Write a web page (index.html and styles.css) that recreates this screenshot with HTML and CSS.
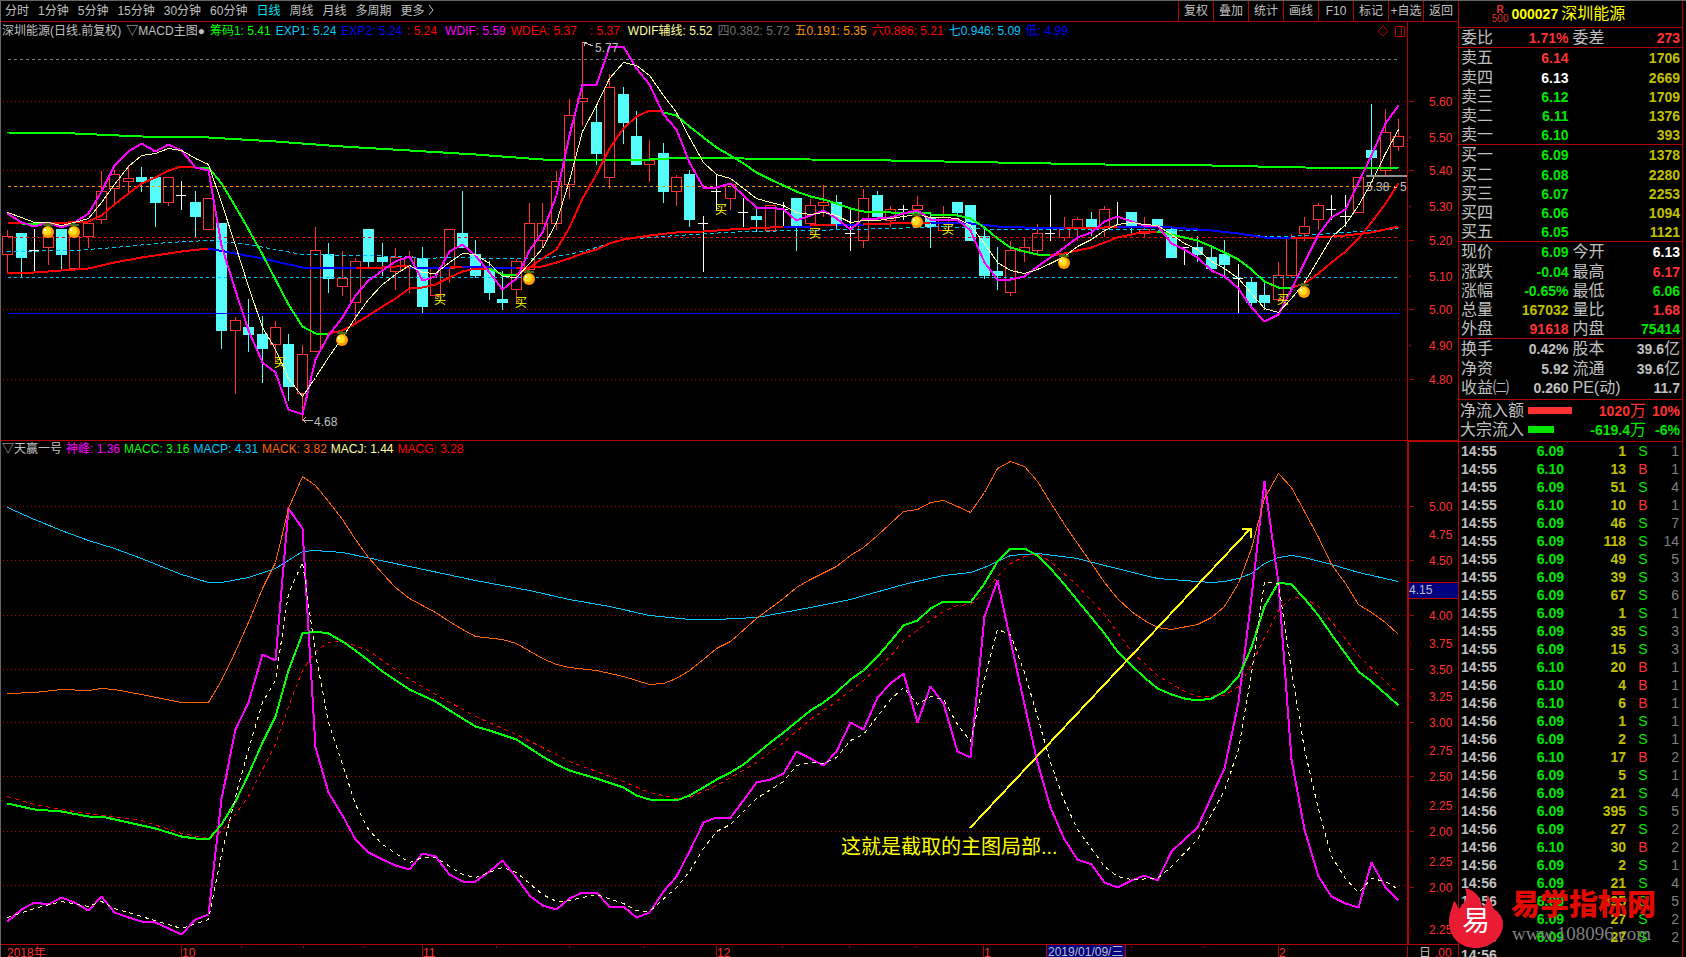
FILE: index.html
```
<!DOCTYPE html>
<html lang="zh-CN">
<head>
  <meta charset="UTF-8">
  <title>000027 深圳能源</title>
  <link rel="stylesheet" href="styles.css">
</head>
<body>
  <div class="left">
    <div class="toolbar">
      <nav class="periods">
        <a href="#">分时</a>
        <a href="#">1分钟</a>
        <a href="#">5分钟</a>
        <a href="#">15分钟</a>
        <a href="#">30分钟</a>
        <a href="#">60分钟</a>
        <a href="#" class="active">日线</a>
        <a href="#">周线</a>
        <a href="#">月线</a>
        <a href="#">多周期</a>
        <a href="#">更多 <svg width="6" height="10" viewBox="0 0 6 10"><path d="M1 0l4 5l-4 5" fill="none" stroke="#c0c0c0"/></svg></a>
      </nav>
      <div class="tools">
        <button>复权</button>
        <button>叠加</button>
        <button>统计</button>
        <button>画线</button>
        <button>F10</button>
        <button>标记</button>
        <button>+自选</button>
        <button>返回</button>
      </div>
    </div>

    <div class="pane pane-main">
      <div class="plot">
        <div class="legend">
          <span>深圳能源(日线.前复权)</span>
          <span>▽MACD主图●</span>
          <span class="lime">筹码1: 5.41</span>
          <span class="sky">EXP1: 5.24</span>
          <span class="blue">EXP2: 5.24</span>
          <span class="pure">: 5.24</span>
          <span class="pink wide">WDIF: 5.59</span>
          <span class="pure">WDEA: 5.37</span>
          <span class="pure wider">: 5.37</span>
          <span class="cream wide">WDIF辅线: 5.52</span>
          <span class="dim">四0.382: 5.72</span>
          <span class="orange">五0.191: 5.35</span>
          <span class="pure">六0.886: 5.21</span>
          <span class="sky">七0.946: 5.09</span>
          <span class="blue">低: 4.99</span>
          <svg class="marks" width="28" height="12" viewBox="0 0 28 12">
            <path d="M6 1l5 5l-5 5l-5 -5z" fill="none" stroke="#b40000"/>
            <path d="M18.500 1.500h9v10h-9zM24.500 1.500v10" fill="none" stroke="#b40000"/>
          </svg>
        </div>
        <svg id="mainChart" class="chart"></svg>
      </div>
      <svg id="mainAxis" class="axis"></svg>
    </div>

    <div class="pane pane-sub">
      <div class="plot">
        <div class="legend">
          <span>▽天赢一号</span>
          <span class="pink">神峰: 1.36</span>
          <span class="lime">MACC: 3.16</span>
          <span class="sky">MACP: 4.31</span>
          <span class="mack">MACK: 3.82</span>
          <span class="cream">MACJ: 1.44</span>
          <span class="pure">MACG: 3.28</span>
        </div>
        <svg id="subChart" class="chart"></svg>
      </div>
      <svg id="subAxis" class="axis"></svg>
    </div>

    <div class="dates">
      <svg id="dateAxis" class="chart"></svg>
    </div>
  </div>

  <div class="quote">
    <h1 class="title"><span class="badge"><b>R</b><i>500</i></span>000027 <span>深圳能源</span></h1>

    <table class="rows one">
      <tr><th>委比</th><td class="red">1.71%</td><th>委差</th><td class="red">273</td></tr>
    </table>

    <table class="rows">
      <tr><th>卖五</th><td class="red">6.14</td><th></th><td class="vol">1706</td></tr>
      <tr><th>卖四</th><td class="white">6.13</td><th></th><td class="vol">2669</td></tr>
      <tr><th>卖三</th><td class="green">6.12</td><th></th><td class="vol">1709</td></tr>
      <tr><th>卖二</th><td class="green">6.11</td><th></th><td class="vol">1376</td></tr>
      <tr><th>卖一</th><td class="green">6.10</td><th></th><td class="vol">393</td></tr>
    </table>

    <table class="rows">
      <tr><th>买一</th><td class="green">6.09</td><th></th><td class="vol">1378</td></tr>
      <tr><th>买二</th><td class="green">6.08</td><th></th><td class="vol">2280</td></tr>
      <tr><th>买三</th><td class="green">6.07</td><th></th><td class="vol">2253</td></tr>
      <tr><th>买四</th><td class="green">6.06</td><th></th><td class="vol">1094</td></tr>
      <tr><th>买五</th><td class="green">6.05</td><th></th><td class="vol">1121</td></tr>
    </table>

    <table class="rows">
      <tr><th>现价</th><td class="green">6.09</td><th>今开</th><td class="white">6.13</td></tr>
      <tr><th>涨跌</th><td class="green">-0.04</td><th>最高</th><td class="red">6.17</td></tr>
      <tr><th>涨幅</th><td class="green">-0.65%</td><th>最低</th><td class="green">6.06</td></tr>
      <tr><th>总量</th><td class="vol">167032</td><th>量比</th><td class="red">1.68</td></tr>
      <tr><th>外盘</th><td class="red">91618</td><th>内盘</th><td class="green">75414</td></tr>
    </table>

    <table class="rows three">
      <tr><th>换手</th><td>0.42%</td><th>股本</th><td>39.6<span>亿</span></td></tr>
      <tr><th>净资</th><td>5.92</td><th>流通</th><td>39.6<span>亿</span></td></tr>
      <tr><th>收益㈡</th><td>0.260</td><th>PE(动)</th><td>11.7</td></tr>
    </table>

    <div class="flows">
      <div class="flow red"><span class="name">净流入额</span><span class="bar" style="width:44px"></span><span class="sum">1020<span>万</span></span><span class="pct">10%</span></div>
      <div class="flow green"><span class="name">大宗流入</span><span class="bar" style="width:26px"></span><span class="sum">-619.4<span>万</span></span><span class="pct">-6%</span></div>
    </div>

    <div class="ticks">
      <table id="ticks"></table>
    </div>

    <div class="brand">
      <svg width="54" height="60" viewBox="0 0 54 60">
        <path d="M16 0C25 2 32 8 33 19C38 17 38 12 38 7C42 12 43 16 44 20C51 25 54 30 54 36C54 50 41 60 27 60C12 60 0 50 0 34C0 26 3 20 5 13C8 15 8 19 10 21C15 15 20 10 16 0z" fill="#ea1c34"/>
        <text x="27" y="43" text-anchor="middle" class="brand-mark">易</text>
      </svg>
      <div>
        <div class="brand-name">易学指标网</div>
        <div class="brand-url">www.108096.com</div>
      </div>
    </div>
  </div>

  <script src="chart.js"></script>
</body>
</html>
```

FILE: styles.css
```
* {
  box-sizing: border-box;
}
body {
  margin: 0;
  height: 100vh;
  display: grid;
  grid-template-columns: minmax(0, 1fr) 228px;
  overflow: hidden;
  background: #000;
  color: #c0c0c0;
  border-top: 1px solid #666;
  border-left: 1px solid #666;
  font: 12px/16px "Liberation Sans", "Noto Sans CJK SC", sans-serif;
}
a {
  color: inherit;
  text-decoration: none;
}

/* left side */
.left {
  display: grid;
  grid-template-rows: 21px minmax(0, 418fr) minmax(0, 504fr) 13px;
  min-width: 0;
}
.toolbar {
  display: flex;
  justify-content: space-between;
  border-bottom: 1px solid #b40000;
}
.periods {
  display: flex;
  align-items: center;
  gap: 9px;
  padding-left: 4px;
  white-space: nowrap;
}
.periods .active {
  color: #00e0f0;
}
.tools {
  display: flex;
}
.tools button {
  width: 35px;
  padding: 0;
  border: 0;
  border-left: 1px solid #b40000;
  background: none;
  color: inherit;
  font: inherit;
  white-space: nowrap;
}
.pane {
  display: grid;
  grid-template-columns: minmax(0, 1fr) 51px;
  min-height: 0;
}
.pane-sub {
  border-top: 1px solid #b40000;
}
.plot {
  display: flex;
  flex-direction: column;
  min-height: 0;
}
.legend {
  display: flex;
  gap: 5px;
  height: 18px;
  line-height: 18px;
  padding-left: 1px;
  white-space: nowrap;
}
.pane-sub .legend {
  gap: 4px;
  line-height: 16px;
}
.legend .wide {
  margin-left: 3px;
}
.legend .wider {
  margin-left: 8px;
}
.marks {
  margin: 3px 2px 0 auto;
}
.chart {
  display: block;
  flex: 1;
  width: 100%;
  height: 100%;
  min-height: 0;
  shape-rendering: crispEdges;
}
.axis {
  width: 100%;
  height: 100%;
  min-height: 0;
  border-left: 1px solid #b40000;
  shape-rendering: crispEdges;
}
.pane-sub .axis {
  border: 2px solid #b40000;
  border-top-width: 1px;
  border-right: 0;
  border-bottom: 0;
}
.dates {
  border-top: 1px solid #b40000;
}
svg text {
  font: 12px "Liberation Sans", "Noto Sans CJK SC", sans-serif;
}
svg .note {
  font-size: 20px;
}
svg .brand-mark {
  font-size: 28px;
  fill: #fff;
}

/* colours */
.red { color: #ff3232; }
.pure { color: #f00; }
.green { color: #00e600; }
.lime { color: #0f0; }
.white { color: #fff; }
.vol { color: #c0c000; }
.sky { color: #00c8ff; }
.blue { color: #00f; }
.pink { color: #f0f; }
.cream { color: #ffffa0; }
.orange { color: #ff9600; }
.mack { color: #ff6400; }
.dim { color: #707070; }

/* quote panel */
.quote {
  position: relative;
  display: flex;
  flex-direction: column;
  min-height: 0;
  margin-right: 3px;
  border-left: 1px solid #b40000;
  border-right: 1px solid #b40000;
  font-weight: bold;
  font-size: 14px;
}
.title {
  display: flex;
  align-items: center;
  justify-content: center;
  gap: 3px;
  height: 26px;
  margin: 0;
  padding-right: 24px;
  color: #ff0;
  font-size: 14px;
}
.title > span:last-child {
  font-size: 16px;
  font-weight: normal;
}
.badge {
  display: flex;
  flex-direction: column;
  align-items: center;
  color: #e03030;
  font-size: 10px;
  line-height: 9px;
}
.badge i {
  font-style: normal;
  font-weight: normal;
}
.rows {
  width: 100%;
  table-layout: fixed;
  border-collapse: separate;
  border-spacing: 0;
  border-top: 1px solid #b40000;
}
.rows tr {
  height: 19px;
}
.rows td,
.rows th {
  padding: 0 2px;
  line-height: 16px;
  white-space: nowrap;
}
.rows th {
  color: #c0c0c0;
  font-size: 16px;
  font-weight: normal;
  text-align: left;
}
.rows td {
  text-align: right;
}
.rows td span,
.sum span {
  font-size: 16px;
  font-weight: normal;
}
.rows:not(.one) tr:first-child {
  height: 20px;
}
.three {
  margin-bottom: 2px;
}
.flows {
  border-top: 1px solid #b40000;
  border-bottom: 1px solid #b40000;
  padding: 1px 0 2px;
}
.flow {
  display: grid;
  grid-template-columns: 68px 48px 1fr 34px;
  align-items: center;
  height: 19px;
  line-height: 18px;
  padding: 0 2px 0 1px;
}
.flow .name {
  color: #c0c0c0;
  font-size: 16px;
  font-weight: normal;
}
.flow .bar {
  height: 7px;
  background: currentColor;
}
.flow .sum,
.flow .pct {
  text-align: right;
  white-space: nowrap;
}
.ticks {
  flex: 1;
  min-height: 0;
  overflow: hidden;
}
.ticks table {
  width: 100%;
  table-layout: fixed;
  border-collapse: collapse;
}
.ticks td {
  width: 62px;
  height: 18px;
  padding: 0 3px 0 2px;
  line-height: 18px;
  text-align: right;
}
.ticks td:first-child {
  width: 46px;
  text-align: left;
}
.ticks .side {
  width: 29px;
  text-align: center;
  font-weight: normal;
}
.ticks .count {
  width: auto;
  color: #808080;
  font-weight: normal;
}

/* site mark over the tick list */
.brand {
  position: absolute;
  left: -10px;
  bottom: 5px;
  display: flex;
  gap: 8px;
}
.brand-name {
  font: 900 29px/28px "Noto Sans CJK SC", sans-serif;
  color: #e00a00;
}
.brand-url {
  padding-left: 1px;
  font: 19px/36px "Liberation Serif", serif;
  color: #808080;
}
```

FILE: chart.js
```
const NS = 'http://www.w3.org/2000/svg';
const W = 1407, FIRST = 6.5, STEP = 13.38;
const DARK = '#b40000', RED = '#ff3232', CYAN = '#54fcfc';

// type, body top, body bottom, high, low  (r = up, c = down, w = flat)
const candles = [
  'r 236 254 230 271', 'c 233 257 233 277', 'w 250 250 229 271', 'r 236 247 225 264', 'c 229 254 229 268',
  'r 236 268 236 268', 'r 223 236 223 247', 'r 191 219 171 223', 'r 174 188 170 203', 'r 178 181 165 192',
  'c 177 181 167 191', 'c 177 202 177 226', 'r 177 202 177 205', 'w 195 195 181 209', 'c 202 216 191 236',
  'r 198 229 198 229', 'c 223 330 223 348', 'r 320 330 317 393', 'c 327 334 299 351', 'c 334 348 316 382',
  'r 327 344 321 362', 'c 344 386 334 400', 'r 354 393 345 420', 'r 250 351 227 351', 'c 254 278 243 292',
  'r 278 286 251 295', 'r 261 302 258 322', 'c 229 261 229 266', 'c 257 261 243 275', 'r 257 271 248 289',
  'r 257 267 251 292', 'c 258 306 247 313', 'r 268 295 268 298', 'r 229 268 229 282', 'c 233 247 191 247',
  'c 254 275 240 277', 'c 269 292 261 299', 'c 299 302 271 309', 'r 261 289 259 302', 'r 223 269 203 284',
  'r 223 240 203 247', 'r 181 223 171 229', 'r 115 184 99 198', 'r 98 101 42 125', 'c 122 153 104 164',
  'r 87 177 74 188', 'c 94 122 87 143', 'c 136 164 111 164', 'r 160 164 140 181', 'c 153 191 143 202',
  'r 177 191 175 205', 'c 174 219 170 226', 'w 223 223 216 271', 'w 191 191 175 209', 'r 184 198 184 209',
  'w 212 212 198 226', 'c 216 219 209 231', 'r 205 230 205 230', 'w 209 209 202 225', 'c 198 225 198 250',
  'r 205 223 199 233', 'r 202 205 185 216', 'c 202 223 195 229', 'w 233 233 208 250', 'r 198 240 189 247',
  'c 195 216 191 218', 'r 209 220 206 226', 'w 209 209 205 219', 'r 205 209 196 216', 'c 217 226 212 247',
  'r 217 230 206 230', 'c 202 212 202 216', 'c 205 240 205 240', 'c 236 275 229 278', 'c 271 275 247 289',
  'r 250 292 241 295', 'r 247 251 237 261', 'r 233 250 224 255', 'w 233 233 195 240', 'r 227 237 217 240',
  'r 219 227 217 240', 'c 219 226 212 235', 'r 209 227 206 236', 'w 217 217 202 224', 'c 212 227 212 232',
  'r 229 233 217 236', 'c 219 226 219 226', 'c 229 257 227 257', 'w 247 247 247 264', 'c 247 254 236 261',
  'c 257 268 247 269', 'c 254 264 240 275', 'w 278 278 264 313', 'c 282 302 278 307', 'c 295 302 282 309',
  'r 275 299 262 301', 'r 238 275 234 277', 'r 226 233 217 240', 'r 205 219 203 229', 'w 209 209 195 219',
  'w 216 216 195 226', 'r 177 212 177 212', 'c 150 157 104 174', 'r 132 170 109 174', 'r 136 146 119 150'
];

// one value per bar
const wdif = [213,222,226,222,227,222,213,191,165,151,143,151,144,150,167,170,245,290,330,362,372,409,414,359,335,317,295,280,270,261,256,280,276,251,244,255,272,289,278,250,232,195,135,84,84,47,46,68,84,114,129,162,187,187,183,195,207,207,209,220,215,210,218,229,218,218,217,213,210,219,219,219,230,262,279,279,276,266,257,247,237,232,221,216,221,225,225,243,249,257,270,276,288,307,321,314,289,262,234,217,209,182,155,123,105];
const wdifAid = [212,217,222,222,225,222,218,202,184,166,155,153,148,150,158,164,202,245,286,327,349,378,396,377,357,337,317,299,284,274,265,272,273,262,253,254,263,276,277,263,248,222,180,131,105,78,62,65,75,95,112,137,162,174,178,188,198,202,205,212,214,212,215,222,220,220,218,216,214,217,217,218,225,243,262,270,273,269,263,256,246,239,230,224,222,224,225,234,243,249,261,268,278,293,308,312,298,282,259,237,224,205,182,153,129];
const shenfeng = [922,910,903,905,898,903,911,897,913,918,922,923,929,935,920,915,800,730,703,654,660,508,528,748,793,816,840,853,860,866,870,854,857,875,882,882,872,861,878,896,906,910,899,893,893,907,907,918,913,892,877,852,823,818,818,801,783,780,774,752,759,766,752,723,730,697,683,673,723,686,704,752,758,616,580,640,705,763,808,840,860,865,883,888,881,876,881,852,840,828,797,769,703,597,481,583,760,830,877,897,904,908,863,888,901];

// colour, then index/value pairs
const wdea = [
  ['#f00', 0,222, 1,222], ['#0f0', 1,223, 3,223],
  ['#f00', 3,223, 6,221, 7,215, 8,204, 9,193, 10,183, 11,177, 12,170, 13,166, 14,166],
  ['#0f0', 14,167, 15,167, 16,183, 17,206, 18,229, 19,254, 20,279, 21,304, 22,326, 23,333, 24,333],
  ['#f00', 24,333, 25,330, 26,323, 27,315, 28,306, 29,298, 30,288, 31,287, 32,284, 33,277, 34,271, 35,268, 36,268],
  ['#0f0', 36,268, 37,274, 38,274],
  ['#f00', 38,274, 39,267, 40,258, 41,249, 42,227, 43,198, 44,174, 45,148, 46,128, 47,116, 48,110, 49,111],
  ['#0f0', 49,112, 50,115, 51,126, 52,137, 53,147, 54,155, 55,163, 56,172, 57,179, 58,185, 59,191, 60,196, 61,199, 62,203, 63,208, 64,211, 66,212, 69,213],
  ['#0f0', 69,214, 71,215, 72,218, 73,227, 74,238, 75,247, 76,251, 77,254, 78,255],
  ['#f00', 78,255, 79,253, 80,250, 81,247, 82,242, 83,237, 84,234, 85,231, 86,231],
  ['#0f0', 86,231, 87,234, 88,237, 89,240, 90,246, 91,252, 92,259, 93,269, 94,281, 95,287, 96,287],
  ['#f00', 96,287, 97,283, 98,273, 99,262, 100,251, 101,238, 102,222, 103,203, 104,183]
];
const exp2 = [
  ['#f00', 0,273, 2,272, 6,268, 8,262, 10,257, 13,251, 15,248], ['#00f', 15,248, 17,253, 19,258, 22,267, 26,267],
  ['#f00', 26,267, 28,267, 30,265], ['#00f', 30,267, 33,267], ['#f00', 33,266, 34,266], ['#00f', 34,266, 38,268],
  ['#f00', 38,268, 40,266, 41,262, 42,258, 43,253, 44,249, 45,243, 46,239, 48,235, 50,232, 52,231, 54,229, 57,227, 58,226],
  ['#00f', 58,226, 60,226], ['#f00', 60,225, 62,224], ['#00f', 62,224, 64,224], ['#f00', 64,224, 66,223, 69,222],
  ['#00f', 69,222, 72,223, 74,226, 76,227, 79,227], ['#f00', 79,227, 82,227, 83,226],
  ['#00f', 83,226, 87,227, 90,230, 92,233, 94,237, 96,238], ['#f00', 96,238, 98,237, 100,235, 102,232, 104,226]
];
const exp1 = [0,251, 5,250, 8,247, 12,242, 15,240, 18,244, 22,254, 30,256, 31,258, 33,257, 37,258, 40,258, 42,254, 44,247, 46,239, 50,235, 55,231, 60,230, 66,228, 70,226, 74,229, 82,229, 90,230, 94,236, 96,236, 104,228];
const chips = [0,132, 5,133, 10,136, 15,137, 20,141, 25,146, 30,150, 35,154, 40,159, 48,159, 51,157, 55,158, 60,159, 66,160, 74,162, 82,164, 90,165, 97,167, 104,168];

const macp = [0,507, 2,519, 4,530, 6,540, 8,548, 10,558, 13,574, 15,582, 16,582, 18,577, 20,568, 22,551, 23,550, 25,552, 30,566, 35,580, 39,590, 42,599, 45,606, 48,615, 51,619, 53,619, 56,617, 60,607, 63,599, 67,584, 70,575, 72,572, 73,567, 74,561, 75,555, 77,553, 80,558, 82,565, 86,578, 90,582, 91,581, 92,578, 93,573, 94,563, 95,557, 96,555, 97,557, 99,564, 101,572, 104,581];
const mack = [0,693, 2,692, 4,689, 6,690, 7,688, 8,689, 10,694, 13,702, 15,702, 16,680, 17,651, 18,622, 19,588, 20,562, 21,508, 22,476, 23,485, 24,501, 25,519, 26,539, 27,557, 28,573, 29,587, 30,598, 32,612, 33,621, 34,629, 35,636, 37,639, 38,643, 40,658, 41,664, 42,667, 44,670, 46,676, 48,684, 49,683, 50,678, 51,670, 52,659, 53,648, 54,641, 56,618, 58,598, 59,587, 60,579, 62,566, 63,555, 64,547, 65,535, 66,523, 67,511, 68,509, 69,502, 70,500, 71,506, 72,512, 73,492, 74,468, 75,461, 76,466, 77,481, 78,502, 79,524, 80,543, 81,563, 82,582, 83,598, 84,611, 85,620, 86,627, 87,629, 89,624, 90,617, 91,606, 92,583, 93,548, 94,498, 95,473, 96,487, 97,511, 98,537, 99,564, 100,583, 101,604, 102,612, 103,622, 104,634];
const macc = [0,804, 2,810, 4,812, 6,817, 7,817, 9,823, 11,829, 13,837, 14,839, 15,840, 16,825, 17,802, 18,775, 19,743, 20,717, 21,670, 22,633, 23,631, 24,633, 25,641, 26,650, 27,660, 28,671, 30,689, 32,701, 34,719, 35,727, 36,731, 38,740, 40,757, 41,765, 42,771, 44,779, 46,788, 47,796, 48,800, 50,801, 51,796, 52,788, 53,780, 54,773, 55,765, 57,743, 58,733, 60,711, 61,702, 62,692, 63,679, 64,670, 65,656, 66,641, 67,625, 68,620, 69,608, 70,601, 72,602, 73,583, 74,561, 75,548, 76,548, 77,555, 78,568, 79,584, 80,600, 81,617, 82,633, 83,651, 84,665, 85,677, 86,688, 87,694, 88,698, 89,700, 90,698, 91,691, 92,676, 93,647, 94,606, 95,582, 96,584, 97,598, 98,615, 99,634, 101,671, 102,681, 104,706];
const macg = [0,797, 2,805, 4,810, 7,816, 10,821, 13,834, 15,839, 16,832, 17,815, 18,797, 19,770, 20,745, 21,707, 22,670, 23,651, 24,642, 25,641, 27,650, 30,679, 32,694, 35,717, 38,735, 40,748, 42,762, 44,772, 46,782, 48,793, 50,799, 51,798, 53,786, 56,763, 58,743, 60,720, 62,701, 64,680, 66,656, 67,640, 69,620, 70,611, 71,605, 72,604, 73,592, 74,576, 75,563, 76,556, 77,553, 78,561, 80,585, 82,614, 84,651, 86,675, 88,691, 89,696, 91,695, 92,686, 93,665, 94,637, 95,610, 96,597, 97,598, 98,606, 99,621, 101,655, 103,681, 104,693];
const macj = [0,918, 2,909, 4,902, 6,907, 7,902, 8,909, 10,917, 13,929, 15,920, 16,855, 17,797, 18,750, 19,702, 20,680, 21,593, 22,562, 23,653, 24,723, 25,765, 26,805, 27,830, 28,845, 30,863, 31,858, 32,858, 34,875, 35,878, 37,868, 38,873, 40,895, 41,902, 42,901, 44,895, 46,904, 47,911, 48,912, 50,888, 51,872, 52,849, 53,832, 54,825, 56,799, 58,782, 59,766, 60,763, 61,764, 62,758, 63,741, 64,735, 66,699, 67,687, 68,705, 69,696, 70,699, 71,725, 72,742, 73,678, 74,629, 75,634, 76,672, 77,717, 78,763, 79,802, 80,830, 82,867, 83,877, 84,880, 86,879, 87,867, 89,840, 91,791, 92,750, 93,673, 94,581, 95,583, 96,670, 97,750, 98,810, 99,857, 100,879, 101,893, 102,879, 103,882, 104,890];

const buys = [[20, 362], [32, 299], [38, 302], [53, 209], [60, 233], [70, 229], [95, 299]];
const balls = [[3, 232], [5, 232], [25, 340], [39, 279], [68, 222], [79, 263], [97, 292]];

// pane covers the vertical span top..bottom
function pane(id, top, bottom, width) {
  const svg = document.getElementById(id);
  svg.innerHTML = '';
  const sx = svg.clientWidth / width;
  const sy = svg.clientHeight / (bottom - top);
  const x = v => Math.round(v * sx);
  const y = v => Math.round((v - top) * sy);
  const bar = i => x(FIRST + i * STEP);

  function add(tag, attrs, text) {
    const el = document.createElementNS(NS, tag);
    for (const k in attrs) el.setAttribute(k, attrs[k]);
    if (text) el.textContent = text;
    svg.appendChild(el);
  }
  function seg(x1, y1, x2, y2, color, width = 1, dash = 'none') {
    const o = width === 1 ? 0.5 : 0;
    add('path', { d: `M${x(x1) + o} ${y(y1) + o}L${x(x2) + o} ${y(y2) + o}`, stroke: color, 'stroke-width': width, 'stroke-dasharray': dash });
  }
  function line(pairs, color, width = 1, dash = 'none') {
    let pts = '';
    for (let i = 0; i < pairs.length; i += 2) pts += `${bar(pairs[i]) + 0.5},${y(pairs[i + 1]) + 0.5} `;
    add('polyline', { points: pts, fill: 'none', stroke: color, 'stroke-width': width, 'stroke-dasharray': dash, 'stroke-linejoin': 'bevel' });
  }
  function text(tx, ty, str, color, cls = '') {
    add('text', { x: x(tx), y: y(ty), fill: color, class: cls }, str);
  }
  return { add, seg, line, text, x, y, bar };
}

const pairs = list => list.flatMap((v, i) => [i, v]);

function drawCandles(p) {
  candles.forEach((row, i) => {
    const part = row.split(' ');
    const [top, bottom, high, low] = part.slice(1).map(v => p.y(Number(v)));
    const x = p.bar(i);
    const color = { r: RED, c: CYAN, w: '#fff' }[part[0]];
    p.add('path', { d: `M${x + 0.5} ${high}V${low + 1}`, stroke: color });
    if (part[0] === 'w') {
      p.add('path', { d: `M${x - 5} ${top + 0.5}H${x + 5}`, stroke: color });
    } else if (part[0] === 'c') {
      p.add('rect', { x: x - 5, y: top, width: 11, height: bottom - top + 1, fill: color });
    } else {
      p.add('rect', { x: x - 4.5, y: top + 0.5, width: 10, height: bottom - top, fill: '#000', stroke: color });
    }
  });
}

function renderMain() {
  const p = pane('mainChart', 40, 440, W);
  for (const y of [101, 170, 240, 309, 379]) p.seg(1, y, 1404, y, DARK, 1, '1 3');
  drawCandles(p);
  p.seg(6, 59, 1397, 59, '#808080', 1, '3 3');
  p.seg(6, 186, 1397, 186, '#ff9600', 1, '3 3');
  p.seg(6, 237, 1397, 237, '#f00', 1, '3 3');
  p.seg(6, 277, 1397, 277, '#00c8ff', 1, '3 3');
  p.seg(6, 313, 1399, 313, '#00f');
  p.line(exp1, '#00c8ff', 1, '4 3');
  p.line(chips, '#0f0', 2);
  for (const [color, ...v] of exp2) p.line(v, color, 2);
  for (const [color, ...v] of wdea) p.line(v, color, 2);
  p.line(pairs(wdif), '#f0f', 2);
  p.line(pairs(wdifAid), '#ffffa0');

  for (const [i, y] of buys) {
    p.add('text', { x: p.bar(i) - 1, y: p.y(y) + 5, fill: '#ff0' }, '买');
  }
  for (const [i, y] of balls) {
    p.add('circle', { cx: p.bar(i), cy: p.y(y), r: 6, fill: '#ff9c00', 'shape-rendering': 'auto' });
    p.add('circle', { cx: p.bar(i) - 1, cy: p.y(y) - 1, r: 4, fill: '#ffe020', 'shape-rendering': 'auto' });
    p.add('circle', { cx: p.bar(i) - 3, cy: p.y(y) - 2, r: 1, fill: '#fff' });
    p.add('path', { d: `M${p.bar(i) - 5} ${p.y(y) - 7}h10M${p.bar(i) - 3} ${p.y(y) - 8}h4`, stroke: '#4a6a1a', 'stroke-width': 2 });
  }

  p.seg(1366, 176, 1407, 176, '#909090', 2);
  p.text(1366, 191, '5.38', '#c0c0c0');
  p.text(1400, 191, '5', '#c0c0c0');
  p.seg(1393, 187, 1396, 187, '#c0c0c0');
  p.text(594, 52, '5.77', '#c0c0c0');
  p.add('path', { d: `M${p.x(592)} ${p.y(46)}l-10 -4m1 4v-4h3`, stroke: '#c0c0c0', fill: 'none' });
  p.text(313, 426, '4.68', '#c0c0c0');
  p.add('path', { d: `M${p.x(312)} ${p.y(420)}h-10m3 -3l-3 3l3 3`, stroke: '#c0c0c0', fill: 'none' });

  const a = pane('mainAxis', 22, 440, 50);
  const labels = ['5.60', '5.50', '5.40', '5.30', '5.20', '5.10', '5.00', '4.90', '4.80'];
  [101, 137, 170, 206, 240, 276, 309, 345, 379].forEach((y, i) => {
    a.seg(0, y, i % 2 ? 2 : 5, y, DARK);
    a.text(21, y + 5, labels[i], RED);
  });
}

function renderSub() {
  const p = pane('subChart', 459, 945, W);
  for (const y of [506, 560, 615, 669, 723, 777, 832, 886]) p.seg(1, y, 1404, y, DARK, 1, '1 3');
  p.line(macg, '#f00', 1, '4 4');
  p.line(macp, '#00c8ff');
  p.line(pairs(shenfeng), '#f0f', 2);
  p.line(mack, '#ff6400');
  p.line(macc, '#0f0', 2);
  p.line(macj, '#ffffa0', 1, '4 4');
  p.seg(970, 829, 1251, 528, '#ff0', 2);
  p.add('path', { d: `M${p.x(1242)} ${p.y(529)}h9v9`, stroke: '#ff0', 'stroke-width': 2, fill: 'none' });
  p.text(841, 855, '这就是截取的主图局部...', '#ff0', 'note');

  const a = pane('subAxis', 442, 945, 49);
  const marks = [[506, '5.00'], [534, '4.75'], [560, '4.50'], [615, '4.00'], [643, '3.75'], [669, '3.50'], [697, '3.25'], [723, '3.00'], [751, '2.75'], [777, '2.50'], [806, '2.25'], [832, '2.00'], [862, '2.25'], [888, '2.00'], [930, '2.25']];
  marks.forEach(([y, s]) => {
    a.seg(0, y, /[05]0$/.test(s) ? 4 : 1, y, DARK);
    a.text(20, y + 5, s, RED);
  });
  a.add('rect', { x: -1, y: a.y(582), width: a.x(49) + 2, height: 16, fill: '#000080', stroke: DARK });
  a.text(0, 594, '4.15', '#c0c0c0');
}

function renderDates() {
  const p = pane('dateAxis', 0, 12, 1458);
  for (const x of [240, 302, 362, 495, 568, 642, 782, 849, 916, 1131, 1204]) p.seg(x, 0, x, 2, DARK);
  for (const [x, s] of [[180, '10'], [421, '11'], [715, '12'], [983, '1'], [1278, '2']]) {
    p.seg(x, 0, x, 14, DARK);
    p.text(x + 1, 12, s, RED);
  }
  p.text(6, 12, '2018年', RED);
  p.add('rect', { x: p.x(1047) - 0.5, y: -1, width: 79, height: 16, fill: '#000080', stroke: DARK });
  p.text(1048, 11, '2019/01/09/三', '#c0c0c0');
  p.seg(1407, 0, 1407, 14, DARK);
  p.text(1419, 12, '日', '#c0c0c0');
  p.text(1435, 12, '.00', RED);
}

const ticks = [
  '14:55 6.09 1 S 1', '14:55 6.10 13 B 1', '14:55 6.09 51 S 4', '14:55 6.10 10 B 1', '14:55 6.09 46 S 7',
  '14:55 6.09 118 S 14', '14:55 6.09 49 S 5', '14:55 6.09 39 S 3', '14:55 6.09 67 S 6', '14:55 6.09 1 S 1',
  '14:55 6.09 35 S 3', '14:55 6.09 15 S 3', '14:55 6.10 20 B 1', '14:56 6.10 4 B 1', '14:56 6.10 6 B 1',
  '14:56 6.09 1 S 1', '14:56 6.09 2 S 1', '14:56 6.10 17 B 2', '14:56 6.09 5 S 1', '14:56 6.09 21 S 4',
  '14:56 6.09 395 S 5', '14:56 6.09 27 S 2', '14:56 6.10 30 B 2', '14:56 6.09 2 S 1', '14:56 6.09 21 S 4',
  '14:56 6.09 395 S 5', '14:56 6.09 27 S 2', '14:56 6.09 27 S 2', '14:56    '
];
document.getElementById('ticks').innerHTML = ticks.map(row => {
  const [time, price, vol, side, count] = row.split(' ');
  return `<tr><td>${time}</td><td class="green">${price}</td><td class="vol">${vol}</td>` +
    `<td class="side ${side === 'B' ? 'red' : 'green'}">${side}</td><td class="count">${count}</td></tr>`;
}).join('');

function render() {
  renderMain();
  renderSub();
  renderDates();
}
render();
window.addEventListener('resize', render);
```
